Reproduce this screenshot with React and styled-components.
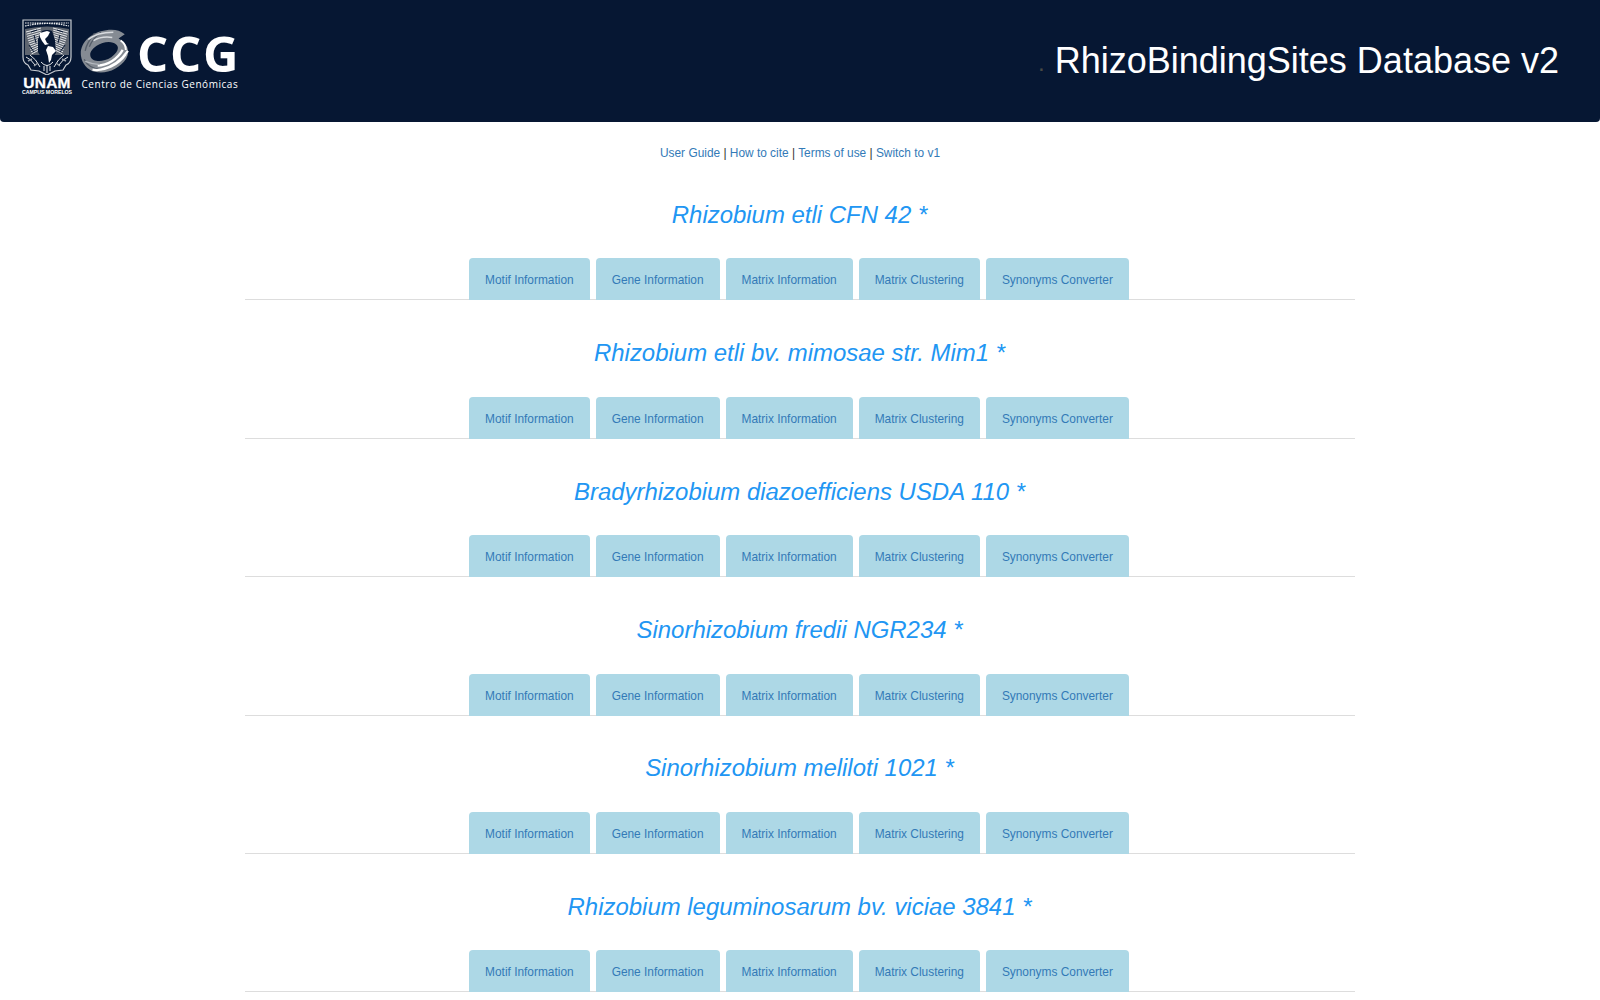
import React from 'react';
import styled, { createGlobalStyle } from 'styled-components';

const GlobalStyle = createGlobalStyle`
  html, body {
    margin: 0;
    padding: 0;
    background: #fff;
    color: #333;
    font-family: "Liberation Sans", Arial, sans-serif;
    font-size: 11.9px;
    line-height: 1.42857;
  }
`;

const Header = styled.header`
  display: flex;
  align-items: center;
  justify-content: space-between;
  height: 122px;
  padding: 0 41px 0 22px;
  background: #061733;
  border-radius: 0 0 4px 4px;
`;

const Logos = styled.div`
  display: flex;
  align-items: flex-start;
  gap: 8px;
  align-self: flex-start;
  padding-top: 19px;
  color: #fff;
`;

const UnamBlock = styled.div`
  display: flex;
  flex-direction: column;
  align-items: center;
  width: 50px;
`;

const UnamName = styled.div`
  margin-top: 2px;
  font-size: 15.5px;
  font-weight: 700;
  line-height: 12px;
  letter-spacing: 0.3px;
  -webkit-text-stroke: 0.3px #fff;
`;

const UnamCampus = styled.div`
  font-size: 5.2px;
  font-weight: 700;
  line-height: 6px;
  white-space: nowrap;
`;

const CcgBlock = styled.div`
  display: flex;
  flex-direction: column;
  padding-top: 9px;
`;

const CcgMark = styled.div`
  display: flex;
  align-items: center;
  gap: 7px;
`;

const CcgName = styled.div`
  padding-top: 3px;
  font-family: "Open Sans", sans-serif;
  font-size: 49px;
  font-weight: 700;
  line-height: 44px;
  letter-spacing: 1.8px;
`;

const CcgCaption = styled.div`
  margin-top: 2px;
  padding-left: 1.5px;
  font-family: "Open Sans", sans-serif;
  font-size: 10px;
  line-height: 14px;
  letter-spacing: 0.55px;
  white-space: nowrap;
`;

const Title = styled.h1`
  display: flex;
  align-items: baseline;
  margin: 4px 0 0;
  font-size: 36px;
  font-weight: 400;
  line-height: 40px;
  color: #fff;
`;

const Dot = styled.span`
  margin-right: 10px;
  font-size: 24px;
  color: #4a4a44;
  transform: translateY(-2px);
`;

const Container = styled.main`
  width: 1110px;
  margin: 0 auto;
`;

const TopLinks = styled.p`
  margin: 0;
  padding: 23px 0 1px;
  line-height: 16px;
  text-align: center;
`;

const Link = styled.a`
  color: #337ab7;
  text-decoration: none;
`;

const SpeciesName = styled.h2`
  margin: 0;
  padding: 39.8px 1px 0 0;
  height: 96.4px;
  box-sizing: border-box;
  font-size: 23.94px;
  font-weight: 400;
  font-style: italic;
  line-height: 26px;
  color: #2196f3;
  text-align: center;
`;

const TabRow = styled.ul`
  display: flex;
  justify-content: center;
  gap: 6px;
  margin: 0;
  padding: 0 2px 0 0;
  list-style: none;
  border-bottom: 1px solid #ddd;
`;

const Tab = styled.li`
  margin-bottom: -1px;
`;

const TabLink = styled(Link)`
  display: block;
  height: 42px;
  padding: 0 16px;
  line-height: 44px;
  background: #add8e6;
  border-radius: 4px 4px 0 0;
`;

// wing feathers of the shield, fanned out on both sides of the map
const feathers = Array.from({ length: 11 }, (_, i) => {
  const y = 11 + i * 2.2;
  return [
    `M${19 - i * 0.2} ${y - 2} L${4 + i * 0.55} ${y + 2}`,
    `M${31 + i * 0.2} ${y - 2} L${46 - i * 0.55} ${y + 2}`,
  ];
}).flat();

const Emblem = () => (
  <svg width="50" height="56" viewBox="0 0 50 56" aria-hidden="true">
    <path d="M1 1 L49 1 L49 38 Q49 44 44 46 L41 51 L33 52 L25 56 L17 52 L9 51 L6 46 Q1 44 1 38 Z" fill="none" stroke="#c9cdd2" strokeWidth="1.2" />
    <path d="M3 4 L47 4 M3 7 Q25 2 47 7" stroke="#e6e8eb" strokeWidth="1.2" strokeDasharray="1.6 0.8" fill="none" />
    <path d="M3 10 Q25 5 47 10 L47 36 L3 36 Z" fill="#5e6570" />
    <path d={feathers.join(' ')} stroke="#e6e8eb" strokeWidth="1" fill="none" />
    <path d="M9 13 L15 11 M41 13 L35 11 M7 26 L12 33 M43 26 L38 33 M12 16 L14 24 M38 16 L36 24" stroke="#061733" strokeWidth="1" fill="none" />
    <path d="M20 12 Q25 10 30 12 L33 21 L34 34 L28 43 L22 43 L16 33 L16 20 Z" fill="#061733" />
    <path d="M18 14 L25 12 L28 13 L26 17 L23 20 L25 24 L27 25 L23 26 L20 22 L18 18 Z" fill="#fff" />
    <path d="M26 27 L31 28 L34 32 L30 36 L29 41 L27 44 L26 37 L24 31 Z" fill="#fff" />
    <path d="M4 38 Q9 40 13 46 M8 36 Q14 40 18 48 M46 38 Q41 40 37 46 M42 36 Q36 40 32 48 M19 43 Q25 50 31 43 M22 47 L22 52 M28 47 L28 52 M25 46 L25 54" stroke="#e6e8eb" strokeWidth="1" fill="none" />
    <path d="M6 42 L10 40 M12 47 L16 44 M44 42 L40 40 M38 47 L34 44" stroke="#9aa0a8" strokeWidth="1.4" fill="none" />
  </svg>
);

const Swirl = () => (
  <svg width="50" height="46" viewBox="0 0 48 44" aria-hidden="true">
    <path
      fillRule="evenodd"
      d="M1 26 C-1 14 10 3 25 1 C33 0 38 1 43 5 L37 9 C45 13 49 21 44 29 C38 38 25 44 14 41 C7 39 2 33 1 26 Z M10 26 C12 32 22 32 30 27 C36 23 38 18 35 15 C31 11 22 12 16 16 C12 19 9 22 10 26 Z"
      fill="#858b93"
    />
    <path d="M14 4 C10 9 6 14 5 21 M20 3 C15 7 11 11 9 17 M4 29 C7 36 13 38 20 39" stroke="#565e69" strokeWidth="1.2" fill="none" />
    <path d="M8 10 C14 5 24 3 32 3 M13 11 C18 8 24 7 31 8" stroke="#d8dbdf" strokeWidth="1.4" fill="none" />
    <path d="M17 35 C26 35 36 29 41 20 M12 39 C24 41 37 34 44 24 M20 39 C30 37 39 31 46 21" stroke="#fff" strokeWidth="2.2" fill="none" />
    <path d="M39 11 C42 13 44 17 44 20" stroke="#fff" strokeWidth="1.8" fill="none" />
    <path d="M5 31 C10 33 14 34 19 34" stroke="#b5bac0" strokeWidth="1.2" fill="none" />
  </svg>
);

const tabs = ['Motif Information', 'Gene Information', 'Matrix Information', 'Matrix Clustering', 'Synonyms Converter'];

const species = [
  'Rhizobium etli CFN 42 *',
  'Rhizobium etli bv. mimosae str. Mim1 *',
  'Bradyrhizobium diazoefficiens USDA 110 *',
  'Sinorhizobium fredii NGR234 *',
  'Sinorhizobium meliloti 1021 *',
  'Rhizobium leguminosarum bv. viciae 3841 *',
];

const App = () => (
  <>
    <GlobalStyle />
    <Header>
      <Logos>
        <UnamBlock>
          <Emblem />
          <UnamName>UNAM</UnamName>
          <UnamCampus>CAMPUS MORELOS</UnamCampus>
        </UnamBlock>
        <CcgBlock>
          <CcgMark>
            <Swirl />
            <CcgName>CCG</CcgName>
          </CcgMark>
          <CcgCaption>Centro de Ciencias Genómicas</CcgCaption>
        </CcgBlock>
      </Logos>
      <Title>
        <Dot>.</Dot>
        <span>RhizoBindingSites Database v2</span>
      </Title>
    </Header>
    <Container>
      <TopLinks>
        <Link href="#">User Guide</Link> | <Link href="#">How to cite</Link> |{' '}
        <Link href="#">Terms of use</Link> | <Link href="#">Switch to v1</Link>
      </TopLinks>
      {species.map(name => (
        <section key={name}>
          <SpeciesName>{name}</SpeciesName>
          <TabRow>
            {tabs.map(tab => (
              <Tab key={tab}>
                <TabLink href="#">{tab}</TabLink>
              </Tab>
            ))}
          </TabRow>
        </section>
      ))}
    </Container>
  </>
);

export default App;
